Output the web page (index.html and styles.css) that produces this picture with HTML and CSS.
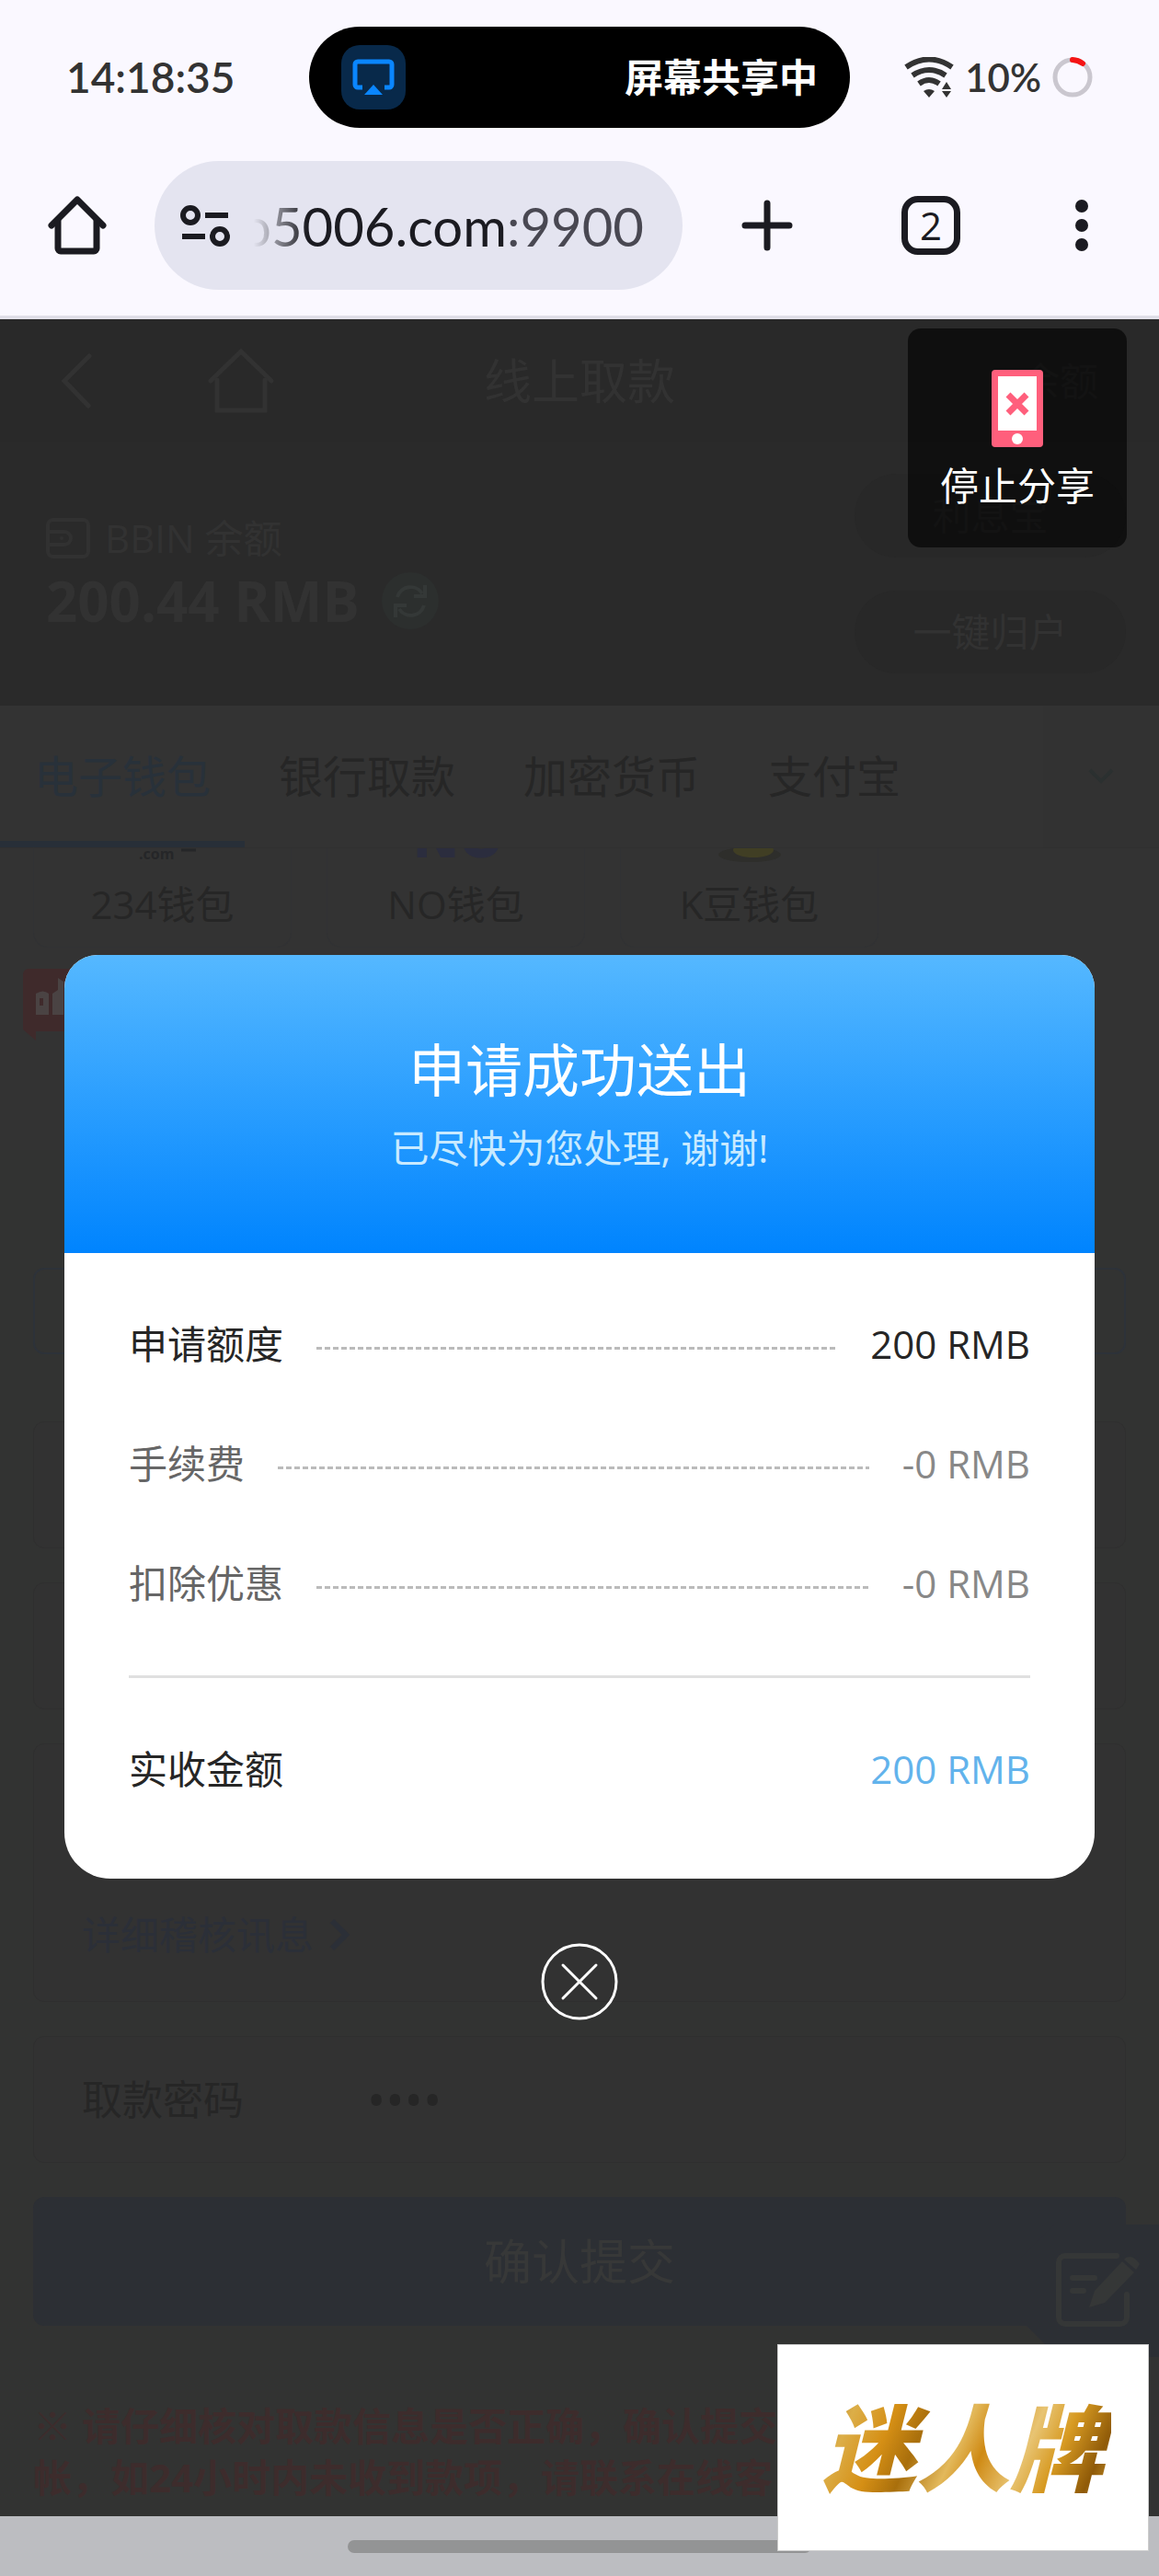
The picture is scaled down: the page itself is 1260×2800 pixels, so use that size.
FILE: index.html
```html
<!DOCTYPE html>
<html lang="zh-CN">
<head>
  <meta charset="UTF-8">
  <meta name="viewport" content="width=device-width, initial-scale=1.0">
  <title>线上取款</title>
  <link rel="stylesheet" href="styles.css">
</head>
<body>

  <header class="browser">
    <div class="status">
      <span class="time">14:18:35</span>
      <div class="island">
        <span class="cast">
          <svg width="46" height="40" viewBox="0 0 46 40">
            <path d="M11 31H6a3 3 0 0 1-3-3V6a3 3 0 0 1 3-3h34a3 3 0 0 1 3 3v22a3 3 0 0 1-3 3h-5" fill="none" stroke="#0a86ff" stroke-width="5"/>
            <path d="M23 28l10 11H13z" fill="#0a86ff"/>
          </svg>
        </span>
        <span>屏幕共享中</span>
      </div>
      <div class="battery">
        <svg width="54" height="44" viewBox="0 0 54 44">
          <g fill="none" stroke="#333" stroke-width="6">
            <path d="M2 11Q27-6 52 11"/>
            <path d="M9 20Q27 8 45 20"/>
            <path d="M16 29Q27 21 38 29"/>
          </g>
          <path d="M21 37q6-4 12 0l-6 7zM46 27l5 8H41zM41 37h10l-5 7z" fill="#333"/>
        </svg>
        <span>10%</span>
        <svg width="44" height="44" viewBox="0 0 44 44">
          <circle cx="22" cy="22" r="19" fill="none" stroke="#cac7cf" stroke-width="5"/>
          <path d="M22 3a19 19 0 0 1 11 4" fill="none" stroke="#f51414" stroke-width="6" stroke-linecap="round"/>
        </svg>
      </div>
    </div>

    <div class="toolbar">
      <button type="button" aria-label="主页">
        <svg width="64" height="64" viewBox="0 0 64 64" fill="none" stroke="#1b1b21" stroke-width="7" stroke-linecap="round" stroke-linejoin="round">
          <path d="M4 32L32 4l28 28"/>
          <path d="M11 27v30a3 3 0 0 0 3 3h36a3 3 0 0 0 3-3V27"/>
        </svg>
      </button>
      <div class="address">
        <svg width="54" height="46" viewBox="0 0 54 46" fill="none" stroke="#1b1b21" stroke-width="6">
          <circle cx="11" cy="12" r="8"/>
          <path d="M27 12h25M2 35h25"/>
          <circle cx="43" cy="35" r="8"/>
        </svg>
        <input type="text" value="o5006.com:9900" aria-label="网址">
      </div>
      <div class="actions">
        <button type="button" aria-label="新标签页">
          <svg width="56" height="56" viewBox="0 0 56 56" stroke="#1b1b21" stroke-width="7" stroke-linecap="round">
            <path d="M28 4v48M4 28h48"/>
          </svg>
        </button>
        <button type="button" class="tab-count">2</button>
        <button type="button" aria-label="菜单">
          <svg width="28" height="56" viewBox="0 0 28 56" fill="#1b1b21">
            <circle cx="14" cy="7" r="7"/>
            <circle cx="14" cy="28" r="7"/>
            <circle cx="14" cy="49" r="7"/>
          </svg>
        </button>
      </div>
    </div>
  </header>

  <main class="page">
    <nav class="topbar">
      <div class="topbar-left">
        <button type="button" aria-label="返回">
          <svg width="34" height="60" viewBox="0 0 34 60" fill="none" stroke="#323232" stroke-width="5" stroke-linecap="round">
            <path d="M31 3L4 30l26 27"/>
          </svg>
        </button>
        <button type="button" aria-label="首页">
          <svg width="72" height="70" viewBox="0 0 72 70" fill="none" stroke="#323232" stroke-width="5" stroke-linecap="round">
            <path d="M3 35L36 3l33 32"/>
            <path d="M10 34v33h52V34"/>
          </svg>
        </button>
      </div>
      <h1>线上取款</h1>
      <a href="#balance">余额</a>
    </nav>

    <section class="balance" id="balance">
      <div>
        <p class="balance-name">
          <svg width="48" height="44" viewBox="0 0 48 44" fill="none" stroke="#313131" stroke-width="4">
            <rect x="2" y="2" width="44" height="40" rx="6"/>
            <path d="M2 15h18a7 7 0 0 1 0 14H2"/>
            <circle cx="17" cy="22" r="1" stroke-width="2"/>
          </svg>
          BBIN 余额
        </p>
        <p class="balance-amount">
          200.44 RMB
          <button type="button" aria-label="刷新">
            <svg width="62" height="62" viewBox="0 0 62 62" fill="none" stroke="#343837" stroke-width="4">
              <path d="M17 27a15 15 0 0 1 27-4M47 14v12H35"/>
              <path d="M46 36a15 15 0 0 1-27 4M15 49V36h12"/>
            </svg>
          </button>
        </p>
      </div>
      <div class="balance-links">
        <button type="button">利息宝</button>
        <button type="button">一键归户</button>
      </div>
    </section>

    <nav class="tabs">
      <a href="#ewallet" class="active">电子钱包</a>
      <a href="#bank">银行取款</a>
      <a href="#crypto">加密货币</a>
      <a href="#alipay">支付宝</a>
      <button type="button" aria-label="更多">
        <svg width="28" height="18" viewBox="0 0 28 18" fill="none" stroke="#2b3030" stroke-width="4">
          <path d="M2 2l12 12L26 2"/>
        </svg>
      </button>
    </nav>

    <section class="wallets" id="ewallet">
      <button type="button">
        <svg width="120" height="16" viewBox="0 0 120 16">
          <text x="34" y="12" font-family="Open Sans" font-size="16" font-weight="700" fill="#252628">.com</text>
          <path d="M80 2h16" stroke="#252628" stroke-width="3"/>
        </svg>
        <span>234钱包</span>
      </button>
      <button type="button">
        <svg width="120" height="16" viewBox="0 0 120 16">
          <text x="13" y="10" font-family="Open Sans" font-size="60" font-weight="800" fill="#2b2d3e">NO</text>
        </svg>
        <span>NO钱包</span>
      </button>
      <button type="button">
        <svg width="120" height="16" viewBox="0 0 120 16">
          <ellipse cx="60" cy="7" rx="34" ry="8" fill="#2e2e2b"/>
          <ellipse cx="64" cy="2" rx="22" ry="8" fill="#403e24"/>
        </svg>
        <span>K豆钱包</span>
      </button>
    </section>

    <div class="promo">
      <svg width="90" height="80" viewBox="0 0 90 80">
        <path d="M6 0h84v68H14v10L0 66V6a6 6 0 0 1 6-6z" fill="#3f2a2b"/>
        <path d="M14 27q8-5 14 0v23H14zM32 27l6-4V10l6 4v36H32z" fill="#4a4343"/>
        <path d="M20 32v8" stroke="#3f2a2b" stroke-width="4"/>
      </svg>
    </div>

    <form class="withdraw">
      <input type="text" class="amount" aria-label="取款金额">
      <div class="card"></div>
      <div class="card"></div>
      <div class="card audit">
        <a href="#audit">
          详细稽核讯息
          <svg width="26" height="36" viewBox="0 0 26 36" fill="none" stroke="#2b2f37" stroke-width="6">
            <path d="M4 3l15 15L4 33"/>
          </svg>
        </a>
      </div>
      <div class="card password">
        <label for="password">取款密码</label>
        <input type="password" id="password" value="0000">
      </div>
      <button type="button" class="submit">确认提交</button>
      <p class="note">※ 请仔细核对取款信息是否正确，确认提交<br>帐，如24小时内未收到款项，请联系在线客</p>
    </form>

    <a href="#feedback" class="feedback" aria-label="意见反馈">
      <svg width="150" height="144" viewBox="0 0 150 144">
        <path d="M36 0H150V144H40L0 104V36z" fill="#2c2f34"/>
        <g fill="none" stroke="#353737" stroke-width="6" stroke-linecap="round">
          <path d="M104 34H48a7 7 0 0 0-7 7v60a7 7 0 0 0 7 7h60a7 7 0 0 0 7-7V76"/>
          <path d="M56 58h24M56 72h12"/>
        </g>
        <path d="M74 90l6-18 30-32 13 12-32 33zM114 36q8-4 15 7l-4 6-13-11z" fill="#353737"/>
      </svg>
    </a>

    <div class="overlay">
      <section class="modal" role="dialog" aria-labelledby="modal-title">
        <div class="modal-head">
          <h2 id="modal-title">申请成功送出</h2>
          <p>已尽快为您处理, 谢谢!</p>
        </div>
        <dl class="modal-body">
          <div class="row strong">
            <dt>申请额度</dt>
            <dd>200 RMB</dd>
          </div>
          <div class="row">
            <dt>手续费</dt>
            <dd>-0 RMB</dd>
          </div>
          <div class="row">
            <dt>扣除优惠</dt>
            <dd>-0 RMB</dd>
          </div>
          <div class="row total">
            <dt>实收金额</dt>
            <dd>200 RMB</dd>
          </div>
        </dl>
      </section>
      <button type="button" class="close" aria-label="关闭">
        <svg width="84" height="84" viewBox="0 0 84 84" fill="none" stroke="#fff" stroke-width="3" stroke-linecap="round">
          <circle cx="42" cy="42" r="40"/>
          <path d="M24 24l36 36M60 24L24 60"/>
        </svg>
      </button>
    </div>

    <button type="button" class="stop-share">
      <svg width="56" height="84" viewBox="0 0 56 84">
        <rect width="56" height="84" rx="4" fill="#ff5f7c"/>
        <path d="M7 7h42v59H7z" fill="#fff"/>
        <path d="M18 27l20 20M38 27L18 47" stroke="#ff5f7c" stroke-width="7"/>
        <circle cx="28" cy="75" r="6" fill="#fff"/>
      </svg>
      停止分享
    </button>
  </main>

  <footer class="gesture">
    <span class="handle"></span>
    <div class="brand"><span>迷人牌</span></div>
  </footer>

</body>
</html>
```
FILE: styles.css
```css
* {
  margin: 0;
  padding: 0;
  box-sizing: border-box;
}

body {
  font-family: "Open Sans", "Noto Sans CJK SC", sans-serif;
  font-size: 42px;
  line-height: 60px;
  background-color: #333;
  color: #262626;
}

button,
input {
  font: inherit;
  color: inherit;
  background: none;
  border: none;
}

button {
  cursor: pointer;
}

a {
  color: inherit;
  text-decoration: none;
}

svg {
  display: block;
  flex-shrink: 0;
}

/* Browser */
.browser {
  background-color: #faf8ff;
  border-bottom: 4px solid #e0dfe8;
  padding: 29px 0 28px;
}

.status {
  display: grid;
  grid-template-columns: 1fr 588px 1fr;
  align-items: center;
  padding: 0 72px;
  margin: 0 0 36px;
  font-family: Lato, "Noto Sans CJK SC", sans-serif;
  font-size: 46px;
  font-weight: 600;
  color: #333;
}

.island {
  display: flex;
  align-items: center;
  justify-content: space-between;
  padding: 20px 35px;
  border-radius: 56px;
  background-color: #000;
  color: #fff;
  font-size: 42px;
}

.cast {
  display: flex;
  align-items: center;
  justify-content: center;
  width: 70px;
  height: 70px;
  border-radius: 20px;
  background-color: #08294a;
}

.battery {
  display: flex;
  align-items: center;
  justify-content: flex-end;
  gap: 12px;
  font-size: 42px;
}

.toolbar {
  display: flex;
  align-items: center;
  padding: 0 70px 0 52px;
}

.toolbar button {
  display: flex;
}

.address {
  flex: 1;
  min-width: 0;
  display: flex;
  align-items: center;
  gap: 12px;
  height: 140px;
  margin: 0 64px 0 52px;
  padding: 0 20px 0 28px;
  border-radius: 70px;
  background-color: #e4e4f0;
}

.address input {
  flex: 1;
  min-width: 0;
  height: 80px;
  font-family: Lato, sans-serif;
  font-size: 58px;
  color: transparent;
  background-image: linear-gradient(90deg, transparent 14px, #1b1b21 72px, #1b1b21 288px, #494852 288px);
  -webkit-background-clip: text;
  background-clip: text;
}

.actions {
  display: flex;
  align-items: center;
  gap: 118px;
}

.toolbar .tab-count {
  align-items: center;
  justify-content: center;
  width: 64px;
  height: 64px;
  border: 7px solid #1b1b21;
  border-radius: 18px;
  font-size: 42px;
  color: #1b1b21;
}

/* Page */
.page {
  position: relative;
  overflow: hidden;
}

.topbar {
  display: grid;
  grid-template-columns: 1fr auto 1fr;
  align-items: center;
  height: 133px;
  padding: 0 66px;
  background-color: #292929;
  color: #323232;
}

.topbar-left {
  display: flex;
  align-items: center;
  gap: 126px;
}

.topbar h1 {
  font-size: 52px;
  font-weight: 400;
}

.topbar a {
  justify-self: end;
}

.balance {
  display: flex;
  justify-content: space-between;
  padding: 35px 36px 35px 50px;
  height: 287px;
  background-color: #2a2a2a;
  color: #323232;
}

.balance-name {
  display: flex;
  align-items: center;
  gap: 16px;
  margin-top: 40px;
}

.balance-amount {
  display: flex;
  align-items: center;
  gap: 24px;
  font-size: 60px;
  font-weight: 700;
  line-height: 76px;
}

.balance-amount button {
  border-radius: 50%;
  background-color: #2c2f2e;
}

.balance-links {
  display: flex;
  flex-direction: column;
  gap: 36px;
}

.balance-links button {
  width: 295px;
  height: 91px;
  border-radius: 46px;
  background-color: #282828;
}

.tabs {
  display: flex;
  height: 155px;
  font-size: 48px;
  background-color: #333;
  border-bottom: 1px solid #303030;
}

.tabs a {
  display: flex;
  align-items: center;
  padding: 0 37px;
  border-top: 7px solid transparent;
  border-bottom: 7px solid transparent;
}

.tabs .active {
  color: #28313a;
  border-bottom-color: #282f38;
}

.tabs button {
  display: flex;
  align-items: center;
  justify-content: center;
  width: 126px;
  margin-left: auto;
  background-color: #323232;
}

.wallets {
  display: flex;
  gap: 38px;
  height: 108px;
  padding: 0 36px;
}

.wallets button {
  display: flex;
  flex-direction: column;
  align-items: center;
  justify-content: space-between;
  width: 281px;
  padding-bottom: 16px;
  border: 1px solid #313234;
  border-top: none;
  border-radius: 0 0 16px 16px;
}

.promo {
  height: 220px;
  padding: 23px 25px;
}

.withdraw {
  display: flex;
  flex-direction: column;
  gap: 37px;
  padding: 128px 36px 10px;
  background-color: #323332;
}

.withdraw .amount {
  height: 94px;
  margin-bottom: 36px;
  border: 2px solid #2d3239;
  border-radius: 12px;
}

.card {
  height: 138px;
  border: 1px solid #2f2f2f;
  border-radius: 12px;
  background-color: #323232;
}

.audit {
  display: flex;
  align-items: flex-end;
  height: 281px;
  padding: 42px 52px;
}

.audit a {
  display: flex;
  align-items: center;
  gap: 16px;
  color: #2b2f38;
}

.password {
  display: flex;
  align-items: center;
  gap: 134px;
  padding: 0 52px;
  font-size: 44px;
}

.password input {
  flex: 1;
  min-width: 0;
  font-size: 54px;
}

.submit {
  height: 140px;
  border-radius: 12px;
  background-color: #2c2f34;
  color: #373838;
  font-size: 52px;
}

.note {
  margin-top: 44px;
  padding-bottom: 4px;
  line-height: 56px;
  font-weight: 700;
  color: #3d2c2c;
}

.feedback {
  position: absolute;
  right: 0;
  bottom: 173px;
}

/* Result dialog */
.overlay {
  position: absolute;
  inset: 0;
  display: flex;
  flex-direction: column;
  align-items: center;
  gap: 70px;
  padding: 691px 70px 0;
}

.modal {
  width: 100%;
  overflow: hidden;
  border-radius: 36px 36px 50px 50px;
  background-color: #fff;
}

.modal-head {
  padding: 80px 40px 84px;
  text-align: center;
  color: #c8eaff;
  background-image: linear-gradient(#55b8ff, #0084fe);
}

.modal-head h2 {
  margin-bottom: 10px;
  font-size: 62px;
  font-weight: 400;
  line-height: 90px;
  color: #fff;
}

.modal-body {
  padding: 34px 70px 20px;
}

.row {
  display: flex;
  align-items: center;
  gap: 36px;
  height: 130px;
  color: #888;
}

/* dashed leader between label and value */
.row dt {
  display: flex;
  flex: 1;
  align-items: center;
  gap: 36px;
  color: #666;
}

.row dt::after {
  content: "";
  flex: 1;
  height: 3px;
  margin-top: 8px;
  background-image: repeating-linear-gradient(90deg, #bbb 0 6px, transparent 6px 9px);
}

.strong,
.strong dt,
.total dt {
  color: #262626;
}

.total {
  height: 201px;
  margin-top: 35px;
  border-top: 3px solid #e0e0e0;
  color: #62b3ec;
}

.total dt::after {
  display: none;
}

.close {
  display: flex;
  border-radius: 50%;
}

.stop-share {
  position: absolute;
  top: 10px;
  right: 35px;
  display: flex;
  flex-direction: column;
  align-items: center;
  gap: 12px;
  width: 238px;
  height: 238px;
  padding-top: 45px;
  border-radius: 14px;
  background-color: rgba(0, 0, 0, 0.62);
  color: #fff;
}

/* Gesture bar */
.gesture {
  position: relative;
  display: flex;
  justify-content: center;
  padding: 26px 0 25px;
  background-color: #bcbdc1;
}

.handle {
  width: 40%;
  height: 14px;
  border-radius: 7px;
  background-color: #939495;
}

.brand {
  position: absolute;
  right: 11px;
  bottom: 27px;
  display: flex;
  align-items: center;
  justify-content: center;
  width: 404px;
  height: 225px;
  border: 1px solid #ccc;
  background-color: #fff;
  font-size: 102px;
  font-style: italic;
  font-weight: 900;
  line-height: 130px;
}

.brand span {
  padding: 0 8px;
  color: transparent;
  background-image: linear-gradient(115deg, #b37a12, #dcae48 14%, #d58f15 26%, #a96f0c 36%, #e3b95c 48%, #cf8a14 56%, #e8c473 68%, #d79a22 78%, #8f5a08 90%, #d9a63a);
  -webkit-background-clip: text;
  background-clip: text;
}
```
